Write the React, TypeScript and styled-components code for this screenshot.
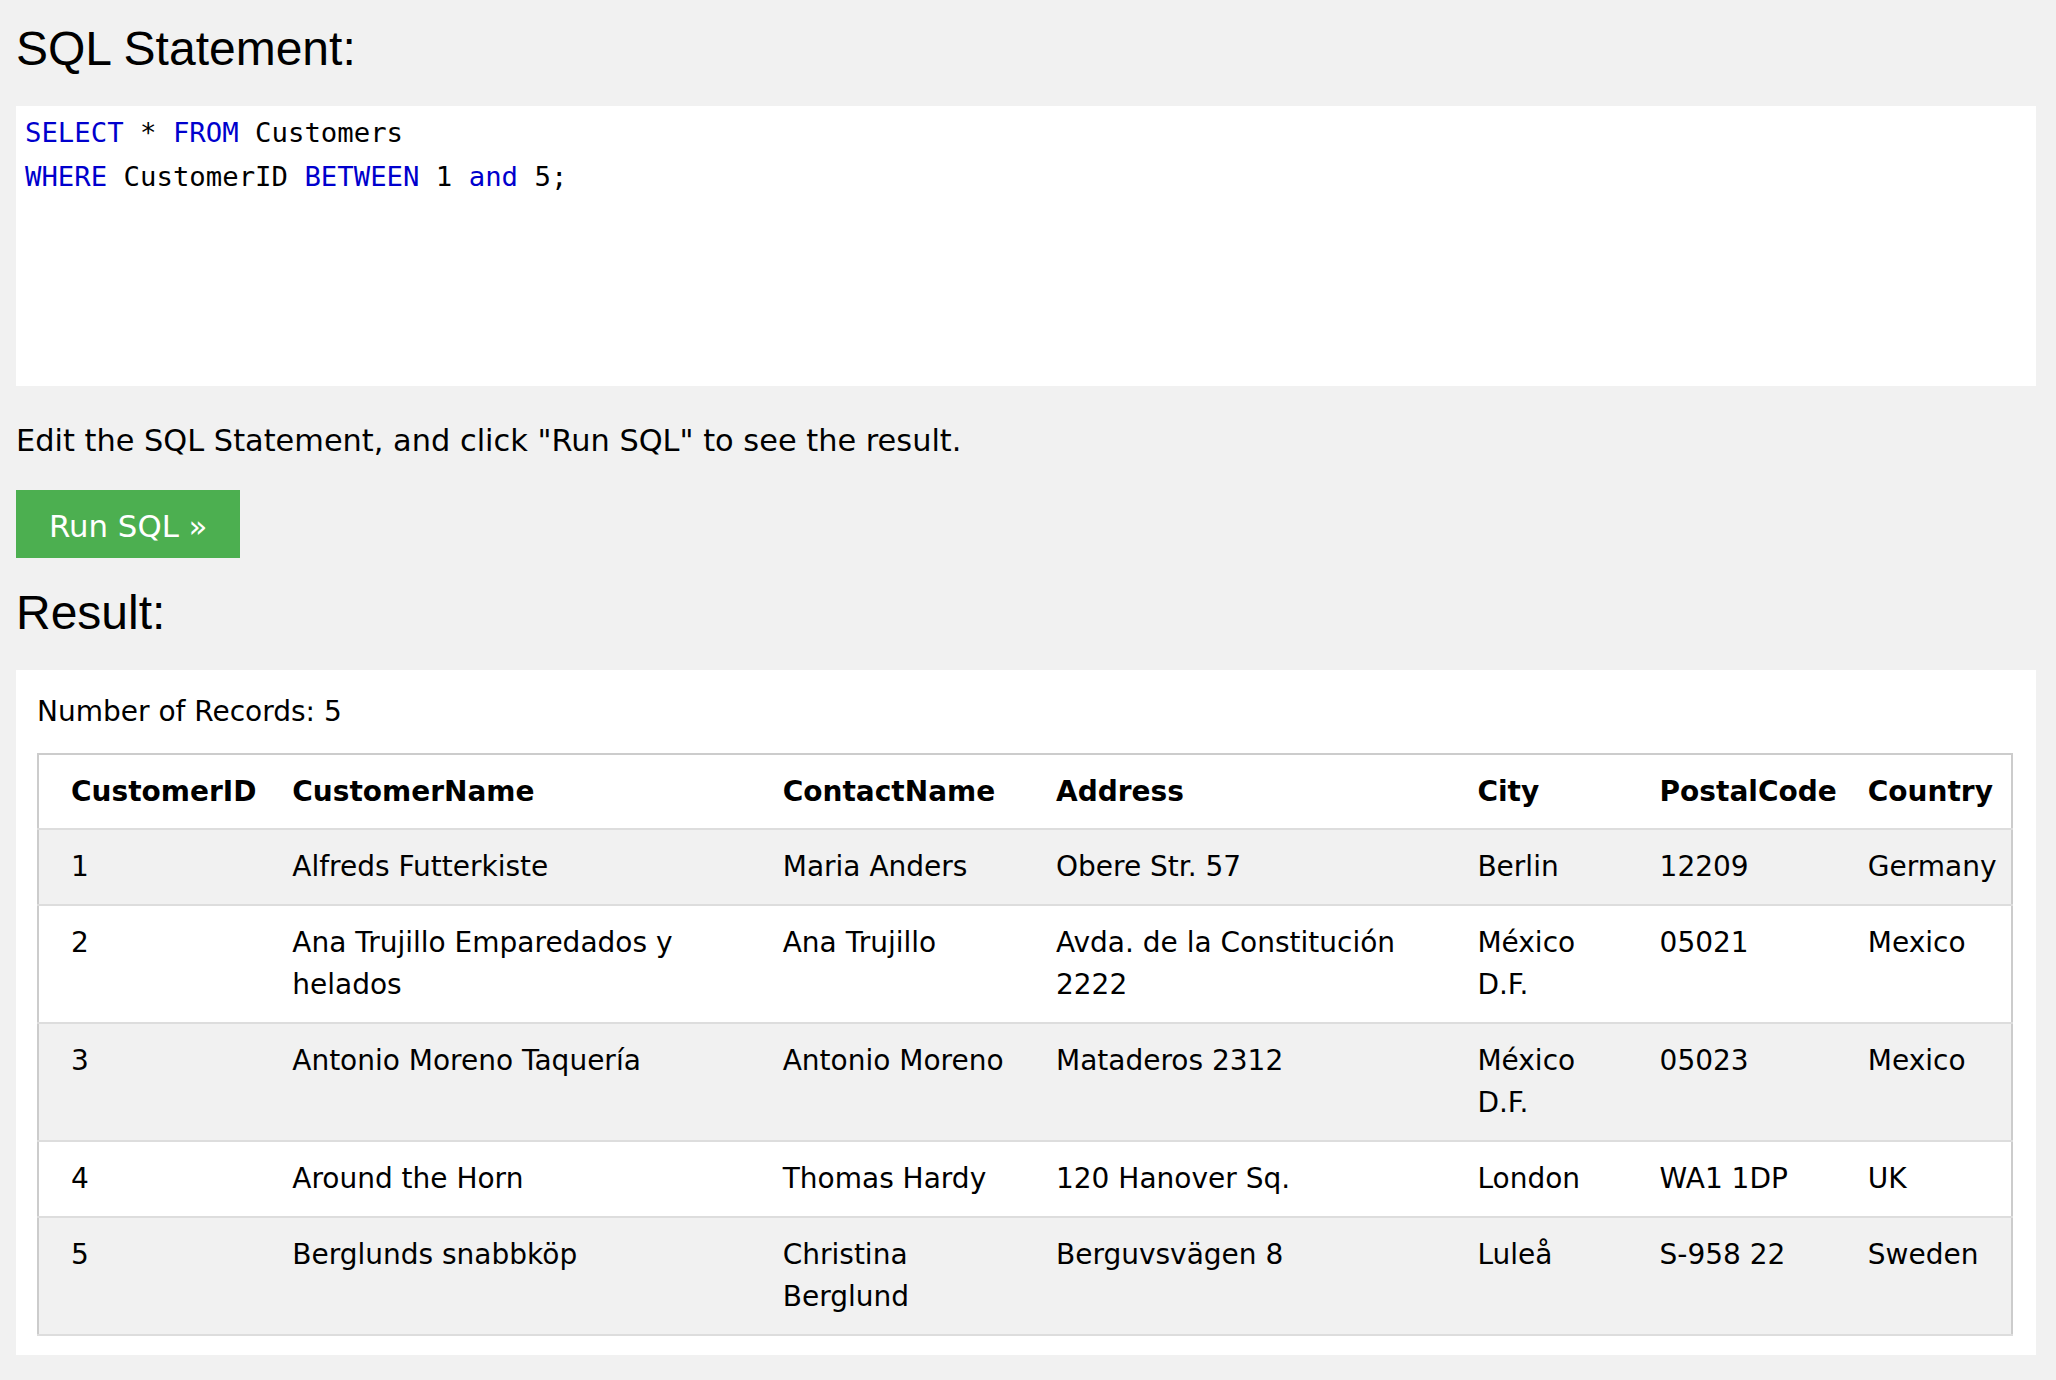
import React from "react";
import styled, { createGlobalStyle } from "styled-components";

const GlobalStyle = createGlobalStyle`
  html, body {
    margin: 0;
    padding: 0;
    background: #f1f1f1;
  }
  body {
    font-family: "DejaVu Sans", Verdana, sans-serif;
    color: #000;
  }
`;

const Page = styled.main`
  display: flex;
  flex-direction: column;
  padding: 0 20px 0 16px;
`;

const Heading = styled.h2<{ $top: number }>`
  margin: ${(p) => p.$top}px 0 33px;
  font-family: "Liberation Sans", Arial, Helvetica, sans-serif;
  font-size: 48px;
  font-weight: 400;
  line-height: 48px;
  color: #000;
`;

const CodeBox = styled.pre`
  margin: 0 0 32px;
  height: 280px;
  box-sizing: border-box;
  padding: 5px 9px;
  background: #fff;
  font-family: "DejaVu Sans Mono", Consolas, monospace;
  font-size: 27.3px;
  line-height: 44px;
  color: #000;
  white-space: pre;
`;

const Keyword = styled.span`
  color: #0000cd;
`;

const Hint = styled.p`
  margin: 0 0 27px;
  font-size: 30.4px;
  line-height: 45px;
`;

const RunButton = styled.button`
  align-self: flex-start;
  margin: 0 0 31px;
  padding: 14px 33px 9px;
  border: none;
  background: #4caf50;
  color: #fff;
  font-family: "DejaVu Sans", Verdana, sans-serif;
  font-size: 30.8px;
  line-height: 45px;
  cursor: pointer;
`;

const ResultBox = styled.section`
  background: #fff;
  padding: 21px 23px 19px 21px;
`;

const Count = styled.p`
  margin: 0 0 20px;
  font-size: 28px;
  line-height: 42px;
`;

const Table = styled.table`
  width: 100%;
  border-collapse: collapse;
  table-layout: fixed;
  border: 2px solid #ccc;
  font-size: 28px;
  line-height: 42px;
`;

const Row = styled.tr<{ $striped: boolean }>`
  background: ${(p) => (p.$striped ? "#f1f1f1" : "#fff")};
  border-bottom: 2px solid #ddd;
`;

const HeadCell = styled.th`
  padding: 16px 16px 15px;
  text-align: left;
  vertical-align: top;
  font-weight: 700;
  white-space: nowrap;
  &:first-child {
    padding-left: 32px;
  }
`;

const Cell = styled.td`
  padding: 16px;
  text-align: left;
  vertical-align: top;
  white-space: pre-line;
  &:first-child {
    padding-left: 32px;
  }
`;

const columns = [
  { name: "CustomerID", width: 238 },
  { name: "CustomerName", width: 490 },
  { name: "ContactName", width: 273 },
  { name: "Address", width: 421 },
  { name: "City", width: 182 },
  { name: "PostalCode", width: 208 },
  { name: "Country", width: 160 },
];

const rows: string[][] = [
  ["1", "Alfreds Futterkiste", "Maria Anders", "Obere Str. 57", "Berlin", "12209", "Germany"],
  ["2", "Ana Trujillo Emparedados y\nhelados", "Ana Trujillo", "Avda. de la Constitución\n2222", "México\nD.F.", "05021", "Mexico"],
  ["3", "Antonio Moreno Taquería", "Antonio Moreno", "Mataderos 2312", "México\nD.F.", "05023", "Mexico"],
  ["4", "Around the Horn", "Thomas Hardy", "120 Hanover Sq.", "London", "WA1 1DP", "UK"],
  ["5", "Berglunds snabbköp", "Christina\nBerglund", "Berguvsvägen 8", "Luleå", "S-958 22", "Sweden"],
];

export default function App() {
  return (
    <>
      <GlobalStyle />
      <Page>
        <Heading $top={25}>SQL Statement:</Heading>
        <CodeBox>
          <Keyword>SELECT</Keyword> * <Keyword>FROM</Keyword> Customers{"\n"}
          <Keyword>WHERE</Keyword> CustomerID <Keyword>BETWEEN</Keyword> 1 <Keyword>and</Keyword> 5;
        </CodeBox>
        <Hint>Edit the SQL Statement, and click "Run SQL" to see the result.</Hint>
        <RunButton type="button">Run SQL »</RunButton>
        <Heading $top={0}>Result:</Heading>
        <ResultBox>
          <Count>Number of Records: 5</Count>
          <Table>
            <colgroup>
              {columns.map((c) => (
                <col key={c.name} style={{ width: c.width }} />
              ))}
            </colgroup>
            <thead>
              <Row $striped={false}>
                {columns.map((c) => (
                  <HeadCell key={c.name}>{c.name}</HeadCell>
                ))}
              </Row>
            </thead>
            <tbody>
              {rows.map((r, i) => (
                <Row key={r[0]} $striped={i % 2 === 0}>
                  {r.map((v, j) => (
                    <Cell key={j}>{v}</Cell>
                  ))}
                </Row>
              ))}
            </tbody>
          </Table>
        </ResultBox>
      </Page>
    </>
  );
}
